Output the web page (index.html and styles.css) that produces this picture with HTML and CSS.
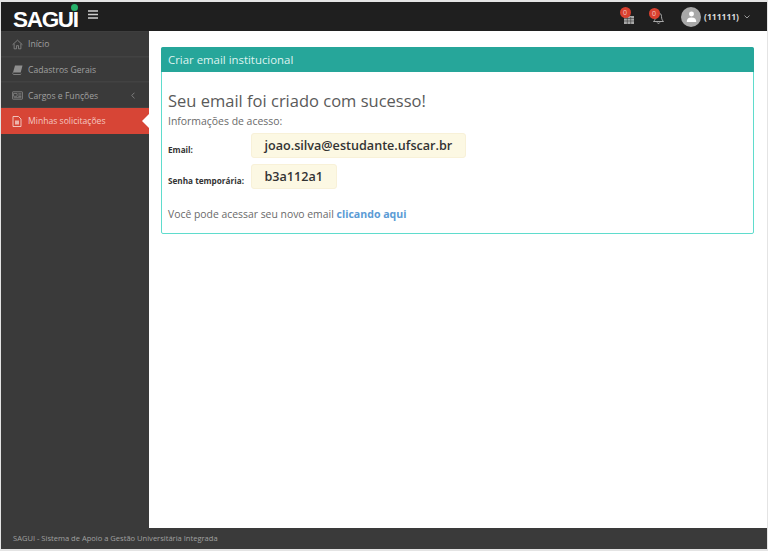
FILE: index.html
```html
<!DOCTYPE html>
<html lang="pt-BR">
<head>
<meta charset="utf-8">
<title>SAGUI</title>
<link rel="stylesheet" href="styles.css">
</head>
<body>
<div class="app">
  <header class="topbar">
    <div class="brand">
      <span class="logo">SAGUI<i class="logo-dot"></i></span>
      <svg class="burger" width="10" height="9" viewBox="0 0 10 9"><path d="M0 1h10M0 4.500h10M0 8h10" stroke="#cfcfcf" stroke-width="1.500"/></svg>
    </div>
    <div class="top-actions">
      <div class="notif notif-cal">
        <svg width="10" height="9" viewBox="0 0 10 9"><path d="M0 1h10v8H0z" fill="#a8a8a8"/><path d="M0 3.500h10M0 6h10M3.300 2v7M6.700 2v7" stroke="#3a3a3a" stroke-width=".6"/></svg>
        <span class="badge">0</span>
      </div>
      <div class="notif notif-bell">
        <svg width="11" height="13" viewBox="0 0 11 13"><path d="M5.500 1C3.500 1 2.500 2.600 2.500 4.500c0 2.700-1 4-2 5h10c-1-1-2-2.300-2-5C8.500 2.600 7.500 1 5.500 1zM4.200 10.500a1.400 1.400 0 0 0 2.600 0" fill="none" stroke="#b8b8b8" stroke-width=".9"/></svg>
        <span class="badge">0</span>
      </div>
      <div class="user">
        <span class="avatar"><svg width="11" height="11" viewBox="0 0 12 12"><circle cx="6" cy="3.200" r="2.700" fill="#fff"/><path d="M.8 12c0-3.500 1.700-5 5.200-5s5.200 1.500 5.200 5z" fill="#fff"/></svg></span>
        <span class="user-name">(111111)</span>
        <svg class="caret" width="6" height="4" viewBox="0 0 6 4"><path d="M.5.500 3 3l2.500-2.500" fill="none" stroke="#a8a8a8" stroke-width=".9"/></svg>
      </div>
    </div>
  </header>
  <div class="middle">
    <nav class="sidebar">
      <a class="item">
        <svg class="ico" width="11" height="11" viewBox="0 0 14 13"><path d="M.7 6.800 7 1l6.300 5.800M2.700 5.500V12h3V8h2.600v4h3V5.500" fill="none" stroke="#8f8f8f" stroke-width="1"/></svg>
        <span>Início</span>
      </a>
      <a class="item">
        <svg class="ico" width="11" height="10" viewBox="0 0 11 10"><path d="M3 .5h7.500L8.700 7.500H1z" fill="#8f8f8f"/><path d="M1 7.500C.4 8.800 1 9.500 1.800 9.500h6.700l.6-.9" fill="none" stroke="#8f8f8f" stroke-width=".8"/></svg>
        <span>Cadastros Gerais</span>
      </a>
      <a class="item">
        <svg class="ico" width="11" height="9" viewBox="0 0 14 11"><rect x=".5" y=".8" width="13" height="9.400" rx=".8" fill="none" stroke="#8f8f8f"/><path d="M2 3h4.500v3.500H2zM8 3.300h4M8 5h4M8 6.800h4M2 8.300h10" fill="none" stroke="#8f8f8f" stroke-width=".9"/></svg>
        <span>Cargos e Funções</span>
        <svg class="chev" width="4" height="7" viewBox="0 0 4 7"><path d="M3.500.7.700 3.500l2.800 2.800" fill="none" stroke="#8f8f8f" stroke-width=".8"/></svg>
      </a>
      <a class="item active">
        <svg class="ico" width="10" height="11" viewBox="0 0 10 11"><path d="M1 .5h5.500L9 3v7.500H1z" fill="none" stroke="#f3d0cb" stroke-width=".9"/><path d="M3 4.500h4V8.500H3z" fill="#f3d0cb" opacity=".8"/></svg>
        <span>Minhas solicitações</span>
      </a>
    </nav>
    <main class="content">
      <section class="panel">
        <h2 class="panel-title">Criar email institucional</h2>
        <div class="panel-body">
          <h3 class="success">Seu email foi criado com sucesso!</h3>
          <p class="info">Informações de acesso:</p>
          <div class="cred-row">
            <span class="cred-label">Email:</span>
            <code class="cred-value">joao.silva@estudante.ufscar.br</code>
          </div>
          <div class="cred-row">
            <span class="cred-label">Senha temporária:</span>
            <code class="cred-value">b3a112a1</code>
          </div>
          <p class="access">Você pode acessar seu novo email <a class="access-link">clicando aqui</a></p>
        </div>
      </section>
    </main>
  </div>
  <footer class="footer">SAGUI - Sistema de Apoio a Gestão Universitária Integrada</footer>
</div>
</body>
</html>
```
FILE: styles.css
```css
* { box-sizing: border-box; }
html, body { margin: 0; height: 100%; }
body {
  background: #e4e4e4;
  font-family: "Open Sans", sans-serif;
  overflow: hidden;
}
.app {
  width: 766px;
  height: 547px;
  margin: 2px 0 0 1px;
  display: flex;
  flex-direction: column;
  background: #3a3a3a;
}
.topbar {
  height: 29px;
  flex: none;
  background: #1f1f1f;
  display: flex;
  justify-content: space-between;
  align-items: center;
}
.brand { display: flex; align-items: flex-start; padding-left: 12px; height: 100%; }
.logo {
  position: relative;
  font-family: "Liberation Sans", sans-serif;
  font-weight: 700;
  font-size: 22.500px;
  line-height: 22px;
  letter-spacing: -1.300px;
  color: #fff;
  margin-top: 7px;
}
.logo-dot {
  position: absolute;
  top: -5px;
  right: -0.500px;
  width: 7px;
  height: 7px;
  border-radius: 50%;
  background: #26b36b;
}
.burger { margin: 8px 0 0 10px; }
.top-actions { display: flex; align-items: center; height: 100%; }
.notif { position: relative; display: flex; }
.notif-cal { margin-right: 19px; padding-top: 6px; }
.notif-bell { margin-right: 17px; padding-top: 4px; }
.badge {
  position: absolute;
  top: -2px;
  left: -4.500px;
  width: 11px;
  height: 11px;
  border-radius: 50%;
  background: #d9402f;
  color: #f3c8c2;
  font-size: 7px;
  line-height: 11px;
  text-align: center;
}
.notif-bell .badge { left: -4.500px; top: 0; }
.user { display: flex; align-items: center; margin-right: 17px; }
.avatar {
  width: 20px;
  height: 20px;
  border-radius: 50%;
  background: #a8a8a8;
  display: flex;
  align-items: center;
  justify-content: center;
}
.user-name {
  color: #d8d8d8;
  font-size: 8.500px;
  font-weight: 700;
  margin: 0 5px 0 3px;
}
.middle { flex: 1; display: flex; min-height: 0; }
.sidebar { width: 148px; flex: none; background: #3a3a3a; }
.item {
  position: relative;
  height: 25.700px;
  display: flex;
  align-items: center;
  padding: 1px 11px 0;
  color: #a0a0a0;
  font-size: 8.600px;
  border-bottom: 1px solid #424242;
  border-top: 1px solid #3e3e3e;
}
.ico { flex: none; margin-right: 5px; }
.chev { margin-left: auto; margin-right: 3px; }
.item.active {
  background: #d74536;
  color: #f5c7c1;
  border: 0;
}
.item.active .ico { margin-right: 6px; }
.item.active::after {
  content: "";
  position: absolute;
  right: 0;
  top: 6px;
  border: 7px solid transparent;
  border-left-width: 0;
  border-right-color: #fff;
}
.content { flex: 1; background: #fff; padding: 16px 13px 0 12px; }
.panel {
  border: 1px solid #5fdccd;
  border-radius: 2px;
  height: 187px;
}
.panel-title {
  margin: -1px -1px 0;
  height: 25px;
  padding: 0 7px;
  background: #26a69a;
  border-radius: 2px 2px 0 0;
  color: #dff3f0;
  font-size: 11.400px;
  font-weight: 400;
  line-height: 25px;
}
.panel-body { padding: 18px 6px 0; color: #444; }
.success {
  margin: 0;
  font-size: 16.500px;
  font-weight: 400;
  line-height: 22px;
  color: #5a5a5a;
}
.info { margin: 2px 0 4px; font-size: 10.450px; line-height: 15px; color: #6a6a6a; }
.cred-row { display: flex; align-items: center; margin-bottom: 6px; }
.cred-label {
  width: 82.500px;
  flex: none;
  font-size: 8.200px;
  font-weight: 700;
  color: #333;
  position: relative;
  top: 4px;
}
.cred-value {
  font-family: "Open Sans", sans-serif;
  font-size: 12.600px;
  font-weight: 600;
  line-height: 23px;
  padding: 0 13px;
  background: #fcf8e3;
  border: 1px solid #f8f1d8;
  border-radius: 3px;
  color: #333;
}
.access { margin: 18px 0 0; font-size: 10.400px; line-height: 15px; color: #6a6a6a; }
.access-link { color: #5b9bd5; font-weight: 700; font-size: 10.600px; }
.footer {
  height: 21px;
  flex: none;
  background: #3a3a3a;
  color: #a0a0a0;
  font-size: 7.550px;
  line-height: 21px;
  padding-left: 12px;
}
```
